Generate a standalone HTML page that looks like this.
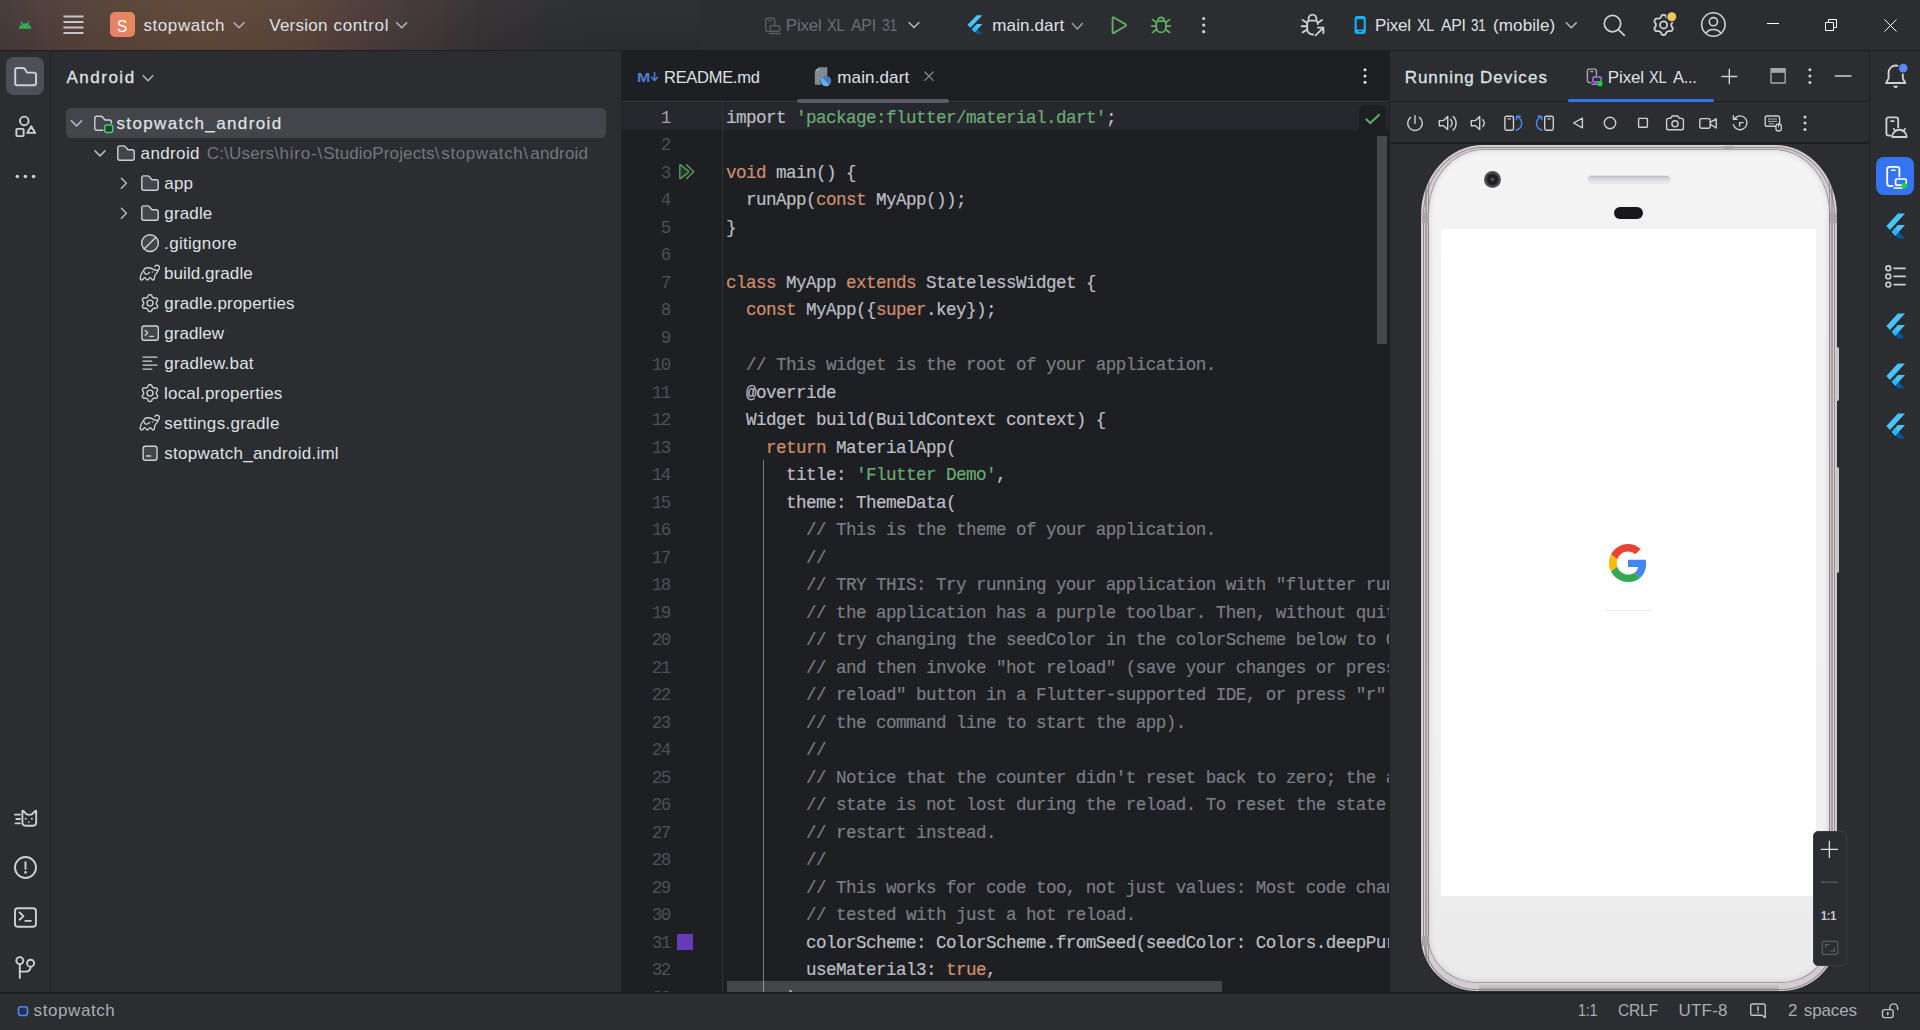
<!DOCTYPE html>
<html lang="en"><head><meta charset="utf-8"><title>stopwatch – main.dart</title>
<style>
*{box-sizing:border-box;margin:0;padding:0}
html,body{width:1920px;height:1030px;overflow:hidden;background:#2b2d30}
body{position:relative;font-family:"Liberation Sans",sans-serif;font-size:17px;color:#dfe1e5}
.a{position:absolute}
.t{position:absolute;white-space:pre;line-height:24px;height:24px}
svg{position:absolute;overflow:visible}
#titlebar{left:0;top:0;width:1920px;height:50px;background:#2b2d30}
#glow{left:0;top:0;width:700px;height:50px;background:linear-gradient(180deg,rgba(255,255,255,.02),rgba(0,0,0,.04)),linear-gradient(90deg,#453a38 0,#50403a 60px,#58433a 110px,#604839 200px,#59443a 300px,#45393a 400px,#363234 480px,#2d2e31 560px,#2b2d30 620px)}
#tb-line{left:0;top:50px;width:1920px;height:1px;background:#1e1f22}
#lstrip{left:0;top:51px;width:50px;height:941px;background:#2b2d30}
#lstrip-b{left:50px;top:51px;width:1px;height:941px;background:#1e1f22}
#proj{left:51px;top:51px;width:570px;height:941px;background:#2b2d30}
#editor{left:621px;top:51px;width:768px;height:941px;background:#1e1f22;overflow:hidden}
#rd{left:1390px;top:51px;width:479px;height:941px;background:#2b2d30;overflow:hidden}
#rd-bl{left:1389px;top:51px;width:1px;height:941px;background:#1e1f22}
#rd-br{left:1869px;top:51px;width:1px;height:941px;background:#1e1f22}
#rstrip{left:1870px;top:51px;width:50px;height:941px;background:#2b2d30}
#status{left:0;top:992px;width:1920px;height:38px;background:#2b2d30;border-top:2px solid #1e1f22}
.code{position:absolute;left:0;top:0;font-family:"Liberation Mono",monospace;font-size:17.6px;letter-spacing:-0.5617px;-webkit-text-stroke:.2px;line-height:27.5px;color:#bcbec4;white-space:pre}
.ln{position:absolute;font-family:"Liberation Mono",monospace;font-size:17.6px;letter-spacing:-1.56px;line-height:27.5px;color:#4b5059;text-align:right;white-space:pre}
.k{color:#cf8e6d}.s{color:#6aab73}.c{color:#7a7e85}

</style></head>
<body>
<div class="a" id="titlebar"></div><div class="a" id="glow"></div><div class="a" id="tb-line"></div>
<div class="a" id="lstrip"></div><div class="a" id="lstrip-b"></div>
<div class="a" id="proj"></div>
<div class="a" style="left:6px;top:57px;width:38px;height:38px;border-radius:8px;background:#4d5057"></div>
<div class="a" style="left:66px;top:108px;width:540px;height:30px;border-radius:5px;background:#43454a"></div>
<div class="a" style="left:110px;top:12px;width:25px;height:25px;border-radius:5px;background:linear-gradient(45deg,#e97f6d,#e18b58)"></div>
<div class="a" id="rstrip"></div>
<div class="a" style="left:1876px;top:157px;width:38px;height:38px;border-radius:8px;background:#3574f0"></div>
<div class="a" id="status"></div>
<div class="a" id="editor">
<div class="a" style="left:0;top:52px;width:768px;height:27px;background:#26282e"></div>
<div class="a" style="left:0;top:50px;width:768px;height:1px;background:#393b40"></div>
<div class="a" style="left:176px;top:48px;width:152px;height:4px;border-radius:2px;background:#5a5d63"></div>
<div class="a" style="left:101px;top:51px;width:1px;height:890px;background:#313438"></div>
<div class="a" style="left:142px;top:409px;width:1px;height:540px;background:#7b7b7d"></div>
<div class="ln" style="left:8.8px;top:53.57px;width:40px"><span style="color:#a1a3ab">1</span>
2
3
4
5
6
7
8
9
10
11
12
13
14
15
16
17
18
19
20
21
22
23
24
25
26
27
28
29
30
31
32
33</div>
<div class="code" style="left:105px;top:53.57px">import <span class="s">'package:flutter/material.dart'</span>;

<span class="k">void</span> main() {
  runApp(<span class="k">const</span> MyApp());
}

<span class="k">class</span> MyApp <span class="k">extends</span> StatelessWidget {
  <span class="k">const</span> MyApp({<span class="k">super</span>.key});

<span class="c">  // This widget is the root of your application.</span>
  @override
  Widget build(BuildContext context) {
    <span class="k">return</span> MaterialApp(
      title: <span class="s">'Flutter Demo'</span>,
      theme: ThemeData(
<span class="c">        // This is the theme of your application.</span>
<span class="c">        //</span>
<span class="c">        // TRY THIS: Try running your application with "flutter run". You'll see</span>
<span class="c">        // the application has a purple toolbar. Then, without quitting the app,</span>
<span class="c">        // try changing the seedColor in the colorScheme below to Colors.green</span>
<span class="c">        // and then invoke "hot reload" (save your changes or press the "hot</span>
<span class="c">        // reload" button in a Flutter-supported IDE, or press "r" if you used</span>
<span class="c">        // the command line to start the app).</span>
<span class="c">        //</span>
<span class="c">        // Notice that the counter didn't reset back to zero; the application</span>
<span class="c">        // state is not lost during the reload. To reset the state<span style="opacity:0">,</span> use hot</span>
<span class="c">        // restart instead.</span>
<span class="c">        //</span>
<span class="c">        // This works for code too, not just values: Most code changes can be</span>
<span class="c">        // tested with just a hot reload.</span>
        colorScheme: ColorScheme.fromSeed(seedColor: Colors.deepPurple),
        useMaterial3: <span class="k">true</span>,
      ),</div>
<div class="a" style="left:56px;top:883px;width:16px;height:16px;background:#673ab7"></div>
<div class="a" style="left:756px;top:85px;width:10px;height:208px;background:#464749"></div>
<div class="a" style="left:106px;top:930.3px;width:495px;height:10.7px;background:rgba(255,255,255,.175)"></div>
<div class="a" style="left:738px;top:54px;width:27px;height:26px;border-radius:6px 6px 0 0;background:#1e1f22"></div>
</div>
<div class="a" id="rd">
 <div class="a" style="left:0;top:50px;width:479px;height:1px;background:#1e1f22"></div>
 <div class="a" style="left:178px;top:48px;width:146px;height:3px;border-radius:2px;background:#3574f0"></div>
 <div class="a" style="left:0;top:91px;width:479px;height:2px;background:#1e1f22"></div>
 <!-- side buttons -->
 <div class="a" style="left:444px;top:296px;width:5px;height:54px;border-radius:2px;background:#c9cbcd"></div>
 <div class="a" style="left:444px;top:416px;width:5px;height:106px;border-radius:2px;background:#c9cbcd"></div>
 <!-- phone frame -->
 <div class="a" style="left:31px;top:94.4px;width:416px;height:846px;border-radius:62px 62px 56px 56px/70px 70px 54px 54px;background:linear-gradient(180deg,#e4dfe1 0,#d2cbce 35%,#b9b2b5 70%,#a59ea1 100%) 50% 100%/300px 10px no-repeat,linear-gradient(90deg,#c9c2c5 0,#d8d1d4 1.5px,#d6cfd2 4px,#9d9699 4.6px,#9d9699 5.4px,#d2cbce 6px,#d2cbce 7px,#8f888c 7.6px,#d3ccd0 8.4px,#d3ccd0 407.6px,#8f888c 408.4px,#d2cbce 409px,#d2cbce 410px,#9d9699 410.6px,#9d9699 411.4px,#d6cfd2 412px,#d8d1d4 414.5px,#bfb8bb 416px)"></div>
 <div class="a" style="left:33.2px;top:96px;width:411.6px;height:842.6px;border-radius:60px 60px 54px 54px/68px 68px 52px 52px;border:1px solid rgba(125,116,120,.75)"></div>
 <div class="a" style="left:38.6px;top:98.6px;width:400.8px;height:832.6px;border-radius:55px 55px 48px 48px/63px 63px 45px 45px;background:linear-gradient(180deg,#f4f4f5 0,#f2f2f3 130px,#f0f0f1 690px,#ebebec 790px,#ececed 833px);box-shadow:inset 0 0 5px 1px rgba(90,85,90,.16),0 0 0 .8px rgba(130,122,126,.8)"></div>
 <!-- antenna bands -->
 <div class="a" style="left:31.5px;top:162px;width:7px;height:10px;background:#a9a4a7"></div>
 <div class="a" style="left:439.5px;top:162px;width:7px;height:10px;background:#a9a4a7"></div>
 <div class="a" style="left:31.5px;top:885px;width:7px;height:10px;background:#a9a4a7"></div>
 <div class="a" style="left:439.5px;top:885px;width:7px;height:10px;background:#a9a4a7"></div>
 <div class="a" style="left:334px;top:94.6px;width:10px;height:4px;background:#a9a4a7"></div>
 <!-- screen -->
 <div class="a" style="left:51px;top:178px;width:375px;height:667px;background:#fff"></div>
 <!-- camera -->
 <div class="a" style="left:94px;top:120px;width:17px;height:17px;border-radius:50%;background:radial-gradient(circle at 50% 50%,#8a8c60 0,#2a2b2e 14%,#1a1b1e 38%,#484a4f 56%,#5a5c61 70%,#2e3034 86%,#5d5f63 100%)"></div>
 <!-- speaker -->
 <div class="a" style="left:198px;top:125px;width:82px;height:7px;border-radius:4px;background:linear-gradient(180deg,#b9bcc4 0,#d6d8de 40%,#e8e9ec 100%);box-shadow:0 0 0 1px #e6e6e8"></div>
 <!-- sensor -->
 <div class="a" style="left:224px;top:156px;width:29px;height:12px;border-radius:6px;background:#17181b"></div>
 <!-- google G -->
 <svg style="left:219px;top:492.7px" width="38" height="38" viewBox="0 0 48 48"><path fill="#EA4335" d="M24 9.5c3.54 0 6.71 1.22 9.21 3.6l6.85-6.85C35.9 2.38 30.47 0 24 0 14.62 0 6.51 5.38 2.56 13.22l7.98 6.19C12.43 13.72 17.74 9.5 24 9.5z"/><path fill="#4285F4" d="M46.98 24.55c0-1.57-.15-3.09-.38-4.55H24v9.02h12.94c-.58 2.96-2.26 5.48-4.78 7.18l7.73 6c4.51-4.18 7.09-10.36 7.09-17.65z"/><path fill="#FBBC05" d="M10.53 28.59c-.48-1.45-.76-2.99-.76-4.59s.27-3.14.76-4.59l-7.98-6.19C.92 16.46 0 20.12 0 24c0 3.88.92 7.54 2.56 10.78l7.97-6.19z"/><path fill="#34A853" d="M24 48c6.48 0 11.93-2.13 15.89-5.81l-7.73-6c-2.15 1.45-4.92 2.3-8.16 2.3-6.26 0-11.57-4.22-13.47-9.91l-7.98 6.19C6.51 42.62 14.62 48 24 48z"/></svg>
 <div class="a" style="left:215px;top:559px;width:47px;height:1px;background:#eeeeee"></div>
 <!-- zoom controls -->
 <div class="a" style="left:422.6px;top:780.4px;width:34.4px;height:134.6px;border-radius:5px;background:#2b2d30;border:1px solid #3c3e43"></div>
</div>
<div class="a" id="rd-bl"></div><div class="a" id="rd-br"></div>
<svg class="a" style="left:0;top:0" width="1920" height="1030" viewBox="0 0 1920 1030">
<path d="M18.8 28.8a6.25 5.5 0 0 1 12.5 0Z" fill="#33b058"/>
<path d="M22.5 24.2L21.3 21.8M27.6 24.2L28.8 21.8" stroke="#33b058" stroke-width="1.25" fill="none" stroke-linecap="round" stroke-linejoin="round" />
<circle cx="22.2" cy="26.4" r="0.7"  fill="#1f7a3c"/>
<circle cx="27.8" cy="26.4" r="0.7"  fill="#1f7a3c"/>
<rect x="63.5" y="15.5" width="20" height="2" fill="#c8c4c6"/>
<rect x="63.5" y="21" width="20" height="2" fill="#c8c4c6"/>
<rect x="63.5" y="26.5" width="20" height="2" fill="#c8c4c6"/>
<rect x="63.5" y="32" width="20" height="2" fill="#c8c4c6"/>
<path d="M234.0 22.8L239 27.8L244.0 22.8" stroke="#b4b8bf" stroke-width="1.5" fill="none" stroke-linecap="round" stroke-linejoin="round" />
<path d="M396.7 22.8L401.7 27.8L406.7 22.8" stroke="#b4b8bf" stroke-width="1.5" fill="none" stroke-linecap="round" stroke-linejoin="round" />
<rect x="765.7" y="18.2" width="9" height="13.2" rx="2" stroke="#5a5d63" stroke-width="1.4" fill="none"/>
<rect x="770.3" y="25.8" width="9.4" height="5.5" rx="1.2" stroke="#5a5d63" stroke-width="1.4" fill="#2b2d30"/>
<path d="M769.5 33.5H780.5" stroke="#5a5d63" stroke-width="1.4" fill="none" stroke-linecap="round" stroke-linejoin="round" />
<path d="M768.6 20.6H771.4" stroke="#5a5d63" stroke-width="1.2" fill="none" stroke-linecap="round" stroke-linejoin="round" />
<path d="M909.0 22.5L914 27.5L919.0 22.5" stroke="#b4b8bf" stroke-width="1.5" fill="none" stroke-linecap="round" stroke-linejoin="round" />
<polygon points="976.76,15.30 982.50,15.30 970.37,27.74 967.50,24.80" fill="#47c5fb"/>
<polygon points="971.79,29.20 977.53,29.20 982.50,34.30 976.76,34.30" fill="#01579b"/>
<polygon points="976.76,24.10 982.50,24.10 977.53,29.20 974.66,32.15 971.79,29.20" fill="#47c5fb"/>
<polygon points="977.53,29.20 974.66,32.15 971.79,29.20 974.66,26.26" fill="#29b6f6" opacity="0.9"/>
<path d="M1072.4 23.5L1077.4 28.9L1082.4 23.5" stroke="#9da0a8" stroke-width="1.5" fill="none" stroke-linecap="round" stroke-linejoin="round" />
<path d="M1112.6 18.2V32.2Q1112.6 33.6 1113.9 32.9L1125.6 26Q1126.7 25.2 1125.6 24.4L1113.9 17.5Q1112.6 16.8 1112.6 18.2Z" stroke="#5fad65" stroke-width="1.9" fill="none" stroke-linecap="round" stroke-linejoin="round" />
<g stroke="#5fad65" stroke-width="1.8" fill="none" stroke-linecap="round" stroke-linejoin="round"><path d="M1156.3 23.5Q1156.3 21.2 1158.6 21.2H1163.6Q1165.9 21.2 1165.9 23.5V27.6A4.8 4.8 0 0 1 1156.3 27.6Z"/><path d="M1157.8 20.8A3.3 3.3 0 0 1 1164.4 20.8"/><path d="M1152.6 19.6L1156.2 22.4M1169.6 19.6L1166 22.4M1151.9 26.2H1156.2M1170.3 26.2H1166M1152.6 32.4L1156.5 29.6M1169.6 32.4L1165.7 29.6"/></g>
<circle cx="1203.7" cy="18.5" r="1.6"  fill="#ced0d6"/>
<circle cx="1203.7" cy="25.1" r="1.6"  fill="#ced0d6"/>
<circle cx="1203.7" cy="31.7" r="1.6"  fill="#ced0d6"/>
<g stroke="#ced0d6" stroke-width="1.85" fill="none" stroke-linecap="round" stroke-linejoin="round"><path d="M1308.5 19.2A4 4.6 0 0 1 1316.5 19.2"/><path d="M1317.8 24V23.3Q1317.8 20.6 1315.2 20.6H1309.8Q1307.2 20.6 1307.2 23.3V29.2A5.4 5.4 0 0 0 1313.2 34.5"/><path d="M1302.6 20L1306.8 22.6M1301.6 26.2H1306.8M1302.6 32.4L1306.9 29.8M1322 20L1318.4 22.6"/><path d="M1315.6 35.4L1323.4 27.6M1318 27.6H1323.4V33.2"/></g>
<rect x="1354.6" y="16.1" width="11.2" height="17.8" rx="2.7" fill="#12b3ff"/>
<rect x="1356.7" y="19.3" width="7" height="10.3" rx="0.3" fill="#2b2d30"/>
<ellipse cx="1360.2" cy="31.6" rx="1.9" ry="0.6" fill="#2b2d30"/>
<path d="M1566.3 22.8L1571.3 27.8L1576.3 22.8" stroke="#b4b8bf" stroke-width="1.5" fill="none" stroke-linecap="round" stroke-linejoin="round" />
<circle cx="1612.5" cy="23.6" r="8.2" stroke="#ced0d6" stroke-width="1.7" fill="none"/>
<path d="M1618.4 29.6L1624.3 35.4" stroke="#ced0d6" stroke-width="1.7" fill="none" stroke-linecap="round" stroke-linejoin="round" />
<path d="M1663.6 14.8L1664.3 14.8L1664.9 15.0L1665.5 15.5L1665.9 16.3L1666.2 17.1L1666.6 17.7L1667.0 18.0L1667.4 18.2L1667.9 18.5L1668.4 18.7L1669.0 18.7L1669.9 18.6L1670.8 18.6L1671.5 18.8L1672.0 19.3L1672.3 19.8L1672.6 20.4L1672.8 21.1L1672.7 21.8L1672.2 22.6L1671.6 23.3L1671.4 23.9L1671.3 24.4L1671.3 24.9L1671.3 25.4L1671.4 25.9L1671.6 26.5L1672.2 27.2L1672.7 28.0L1672.8 28.7L1672.6 29.4L1672.3 29.9L1672.0 30.5L1671.5 31.0L1670.8 31.2L1669.9 31.2L1669.0 31.1L1668.4 31.1L1667.9 31.3L1667.4 31.6L1667.0 31.8L1666.6 32.1L1666.2 32.7L1665.9 33.5L1665.5 34.3L1664.9 34.8L1664.3 35.0L1663.6 35.0L1662.9 35.0L1662.3 34.8L1661.7 34.3L1661.3 33.5L1661.0 32.7L1660.6 32.1L1660.2 31.8L1659.8 31.6L1659.3 31.3L1658.8 31.1L1658.2 31.1L1657.3 31.2L1656.4 31.2L1655.7 31.0L1655.2 30.5L1654.9 30.0L1654.6 29.4L1654.4 28.7L1654.5 28.0L1655.0 27.2L1655.6 26.5L1655.8 25.9L1655.9 25.4L1655.9 24.9L1655.9 24.4L1655.8 23.9L1655.6 23.3L1655.0 22.6L1654.5 21.8L1654.4 21.1L1654.6 20.4L1654.9 19.8L1655.2 19.3L1655.7 18.8L1656.4 18.6L1657.3 18.6L1658.2 18.7L1658.8 18.7L1659.3 18.5L1659.8 18.2L1660.2 18.0L1660.6 17.7L1661.0 17.1L1661.3 16.3L1661.7 15.5L1662.3 15.0L1662.9 14.8Z" stroke="#ced0d6" stroke-width="1.8" fill="none" stroke-linecap="round" stroke-linejoin="round" />
<circle cx="1663.6" cy="24.9" r="3.6" stroke="#ced0d6" stroke-width="1.8" fill="none"/>
<circle cx="1671.8" cy="16.7" r="5.6"  fill="#2b2d30"/>
<circle cx="1671.8" cy="16.7" r="4.5"  fill="#f2c55c"/>
<circle cx="1713.4" cy="24.5" r="11.7" stroke="#ced0d6" stroke-width="1.6" fill="none"/>
<circle cx="1713.4" cy="21.7" r="4.1" stroke="#ced0d6" stroke-width="1.6" fill="none"/>
<path d="M1705.9 33.4A8.2 6.6 0 0 1 1720.9 33.4" stroke="#ced0d6" stroke-width="1.6" fill="none" stroke-linecap="round" stroke-linejoin="round" />
<path d="M1767 23.5H1779M1825.5 22.5H1833.5V30.5H1825.5ZM1828.5 22.5V19.5H1836.5V27.5H1833.5M1884.5 19.5L1896.5 31.5M1896.5 19.5L1884.5 31.5" stroke="#ffffff" stroke-width="1" fill="none"/>
<path d="M15.2 70Q15.2 68 17.2 68L22.436 68Q23.936 68 24.936 69L27.136 72.644L34.0 72.644Q36.0 72.644 36.0 74.644L36.0 83.2Q36.0 85.2 34.0 85.2L17.2 85.2Q15.2 85.2 15.2 83.2Z" stroke="#ced0d6" stroke-width="1.95" fill="none" stroke-linecap="round" stroke-linejoin="round" />
<circle cx="24.3" cy="120.9" r="4.3" stroke="#ced0d6" stroke-width="1.9" fill="none"/>
<rect x="16.4" y="128.9" width="7.2" height="7.2" rx="0.8" stroke="#ced0d6" stroke-width="1.9" fill="none"/>
<path d="M31.2 126.2L35.2 132.9H27.2Z" stroke="#ced0d6" stroke-width="1.9" fill="none" stroke-linecap="round" stroke-linejoin="round" />
<circle cx="25.4" cy="176.5" r="1.75"  fill="#ced0d6"/>
<circle cx="17.3" cy="176.5" r="1.75"  fill="#ced0d6"/>
<circle cx="33.6" cy="176.5" r="1.75"  fill="#ced0d6"/>
<g stroke="#ced0d6" stroke-width="1.85" fill="none" stroke-linecap="round" stroke-linejoin="round"><path d="M22.4 811.4Q22.4 810.2 23.3 811L27 814.6H31.6L35.3 811Q36.2 810.2 36.2 811.4V822.6Q36.2 825.7 33.1 825.7H25.5Q22.4 825.7 22.4 822.6Z"/><path d="M14.8 814.6H20M16.3 819H20M15.5 823.3H20"/></g>
<circle cx="25.6" cy="818.7" r="1"  fill="#ced0d6"/>
<circle cx="31.9" cy="818.7" r="1"  fill="#ced0d6"/>
<path d="M27.4 821.4H30.2L28.8 823.2Z" fill="#ced0d6"/>
<circle cx="25.5" cy="867.5" r="10.5" stroke="#ced0d6" stroke-width="1.9" fill="none"/>
<path d="M25.5 862.3V868.9" stroke="#ced0d6" stroke-width="1.9" fill="none" stroke-linecap="round" stroke-linejoin="round" />
<circle cx="25.5" cy="872.4" r="1.3"  fill="#ced0d6"/>
<rect x="15" y="908.3" width="20.9" height="18.4" rx="2.6" stroke="#ced0d6" stroke-width="1.9" fill="none"/>
<path d="M19.6 912.5L23.5 916.1L19.6 919.7M25.3 920.9H30.9" stroke="#ced0d6" stroke-width="1.9" fill="none" stroke-linecap="round" stroke-linejoin="round" />
<circle cx="19.8" cy="960.6" r="3.5" stroke="#ced0d6" stroke-width="1.9" fill="none"/>
<circle cx="30.6" cy="963.2" r="3.5" stroke="#ced0d6" stroke-width="1.9" fill="none"/>
<path d="M19.8 964.2V978M30.6 966.8Q30.6 971.6 25.6 971.6H19.8" stroke="#ced0d6" stroke-width="1.9" fill="none" stroke-linecap="round" stroke-linejoin="round" />
<path d="M143.2 75.8L148 80.8L152.8 75.8" stroke="#b4b8bf" stroke-width="1.5" fill="none" stroke-linecap="round" stroke-linejoin="round" />
<path d="M71.5 120.9L76.5 125.9L81.5 120.9" stroke="#b4b8bf" stroke-width="1.5" fill="none" stroke-linecap="round" stroke-linejoin="round" />
<path d="M94.8 118.2Q94.8 116.2 96.8 116.2L100.27199999999999 116.2Q101.77199999999999 116.2 102.77199999999999 117.2L104.972 119.98L109.4 119.98Q111.4 119.98 111.4 121.98L111.4 128.2Q111.4 130.2 109.4 130.2L96.8 130.2Q94.8 130.2 94.8 128.2Z" stroke="#ced0d6" stroke-width="1.4" fill="none" stroke-linecap="round" stroke-linejoin="round" />
<rect x="104.7" y="124.9" width="8" height="7.6" rx="2" stroke="#43454a" stroke-width="2.6" fill="#43454a"/>
<rect x="104.7" y="124.9" width="8" height="7.6" rx="2" stroke="#3fcf6e" stroke-width="1.5" fill="#24402c"/>
<path d="M95.0 150.9L100 155.9L105.0 150.9" stroke="#b4b8bf" stroke-width="1.5" fill="none" stroke-linecap="round" stroke-linejoin="round" />
<path d="M117.8 147.9Q117.8 145.9 119.8 145.9L123.188 145.9Q124.688 145.9 125.688 146.9L127.888 149.788L132.2 149.788Q134.2 149.788 134.2 151.788L134.2 158.3Q134.2 160.3 132.2 160.3L119.8 160.3Q117.8 160.3 117.8 158.3Z" stroke="#ced0d6" stroke-width="1.4" fill="#43454a" stroke-linecap="round" stroke-linejoin="round" />
<path d="M121.4 178.2L126.4 183.2L121.4 188.2" stroke="#b4b8bf" stroke-width="1.5" fill="none" stroke-linecap="round" stroke-linejoin="round" />
<path d="M141.8 177.9Q141.8 175.9 143.8 175.9L147.18800000000002 175.9Q148.68800000000002 175.9 149.68800000000002 176.9L151.888 179.788L156.20000000000002 179.788Q158.20000000000002 179.788 158.20000000000002 181.788L158.20000000000002 188.3Q158.20000000000002 190.3 156.20000000000002 190.3L143.8 190.3Q141.8 190.3 141.8 188.3Z" stroke="#ced0d6" stroke-width="1.4" fill="#43454a" stroke-linecap="round" stroke-linejoin="round" />
<path d="M121.4 208.2L126.4 213.2L121.4 218.2" stroke="#b4b8bf" stroke-width="1.5" fill="none" stroke-linecap="round" stroke-linejoin="round" />
<path d="M141.8 207.9Q141.8 205.9 143.8 205.9L147.18800000000002 205.9Q148.68800000000002 205.9 149.68800000000002 206.9L151.888 209.788L156.20000000000002 209.788Q158.20000000000002 209.788 158.20000000000002 211.788L158.20000000000002 218.3Q158.20000000000002 220.3 156.20000000000002 220.3L143.8 220.3Q141.8 220.3 141.8 218.3Z" stroke="#ced0d6" stroke-width="1.4" fill="#43454a" stroke-linecap="round" stroke-linejoin="round" />
<circle cx="150" cy="243.1" r="8.4" stroke="#ced0d6" stroke-width="1.4" fill="#43454a"/>
<path d="M144.3 248.8L155.7 237.4" stroke="#ced0d6" stroke-width="1.4" fill="none" stroke-linecap="round" stroke-linejoin="round" />
<g transform="translate(0 0)" stroke="#ced0d6" stroke-width="1.35" fill="none" stroke-linecap="round" stroke-linejoin="round"><path d="M140.4 279C140.2 276 141.5 272.8 143.6 270.6C144 269.6 144.2 269 144.7 268.6C146.2 267.5 150 267.4 152.4 268.8C154 269.7 156.4 270.7 158 270.1C159.7 269.4 159.9 266.7 158.5 265.6C157.3 264.7 155.3 265.2 154.9 266.5"/><path d="M158.3 269.9C158.1 272 156.1 273.6 155.3 274.6C154.5 275.7 154.4 277.6 154.2 279.1C153.9 280.2 152.7 280.1 152.2 279.6L151 278.1Q150.2 277.4 149.4 278.1L148.2 279.6Q147.4 280.3 146.6 279.6L145.4 278.1Q144.7 277.4 143.9 278.1L142.7 279.5C142 280.3 140.6 280.2 140.4 279"/><path d="M143.8 271.4C144.2 272.8 144.8 273.8 145.6 274.1C146.8 274.4 148.4 273.4 149.6 272.4"/></g>
<circle cx="152.5" cy="272.1" r="0.75"  fill="#ced0d6"/>
<g transform="translate(0 150)" stroke="#ced0d6" stroke-width="1.35" fill="none" stroke-linecap="round" stroke-linejoin="round"><path d="M140.4 279C140.2 276 141.5 272.8 143.6 270.6C144 269.6 144.2 269 144.7 268.6C146.2 267.5 150 267.4 152.4 268.8C154 269.7 156.4 270.7 158 270.1C159.7 269.4 159.9 266.7 158.5 265.6C157.3 264.7 155.3 265.2 154.9 266.5"/><path d="M158.3 269.9C158.1 272 156.1 273.6 155.3 274.6C154.5 275.7 154.4 277.6 154.2 279.1C153.9 280.2 152.7 280.1 152.2 279.6L151 278.1Q150.2 277.4 149.4 278.1L148.2 279.6Q147.4 280.3 146.6 279.6L145.4 278.1Q144.7 277.4 143.9 278.1L142.7 279.5C142 280.3 140.6 280.2 140.4 279"/><path d="M143.8 271.4C144.2 272.8 144.8 273.8 145.6 274.1C146.8 274.4 148.4 273.4 149.6 272.4"/></g>
<circle cx="152.5" cy="422.1" r="0.75"  fill="#ced0d6"/>
<path d="M150.0 294.7L150.5 294.7L151.1 294.9L151.6 295.3L151.9 296.0L152.2 296.7L152.5 297.2L152.8 297.4L153.2 297.6L153.5 297.8L153.9 298.0L154.4 298.0L155.2 297.9L156.0 297.8L156.6 298.1L157.0 298.4L157.3 298.9L157.5 299.4L157.6 299.9L157.5 300.5L157.1 301.2L156.6 301.8L156.4 302.3L156.3 302.7L156.3 303.1L156.3 303.5L156.4 303.9L156.6 304.4L157.1 305.0L157.5 305.7L157.6 306.3L157.5 306.8L157.3 307.3L157.0 307.8L156.6 308.1L156.0 308.4L155.2 308.3L154.4 308.2L153.9 308.2L153.5 308.4L153.2 308.6L152.8 308.8L152.5 309.0L152.2 309.5L151.9 310.2L151.6 310.9L151.1 311.3L150.5 311.5L150.0 311.5L149.5 311.5L148.9 311.3L148.4 310.9L148.1 310.2L147.8 309.5L147.5 309.0L147.2 308.8L146.8 308.6L146.5 308.4L146.1 308.2L145.6 308.2L144.8 308.3L144.0 308.4L143.4 308.1L143.0 307.8L142.7 307.3L142.5 306.8L142.4 306.3L142.5 305.7L142.9 305.0L143.4 304.4L143.6 303.9L143.7 303.5L143.7 303.1L143.7 302.7L143.6 302.3L143.4 301.8L142.9 301.2L142.5 300.5L142.4 299.9L142.5 299.4L142.7 298.9L143.0 298.4L143.4 298.1L144.0 297.8L144.8 297.9L145.6 298.0L146.1 298.0L146.5 297.8L146.8 297.6L147.2 297.4L147.5 297.2L147.8 296.7L148.1 296.0L148.4 295.3L148.9 294.9L149.5 294.7Z" stroke="#ced0d6" stroke-width="1.4" fill="none" stroke-linecap="round" stroke-linejoin="round" />
<circle cx="150" cy="303.1" r="3.0" stroke="#ced0d6" stroke-width="1.4" fill="none"/>
<path d="M150.0 384.7L150.5 384.7L151.1 384.9L151.6 385.3L151.9 386.0L152.2 386.7L152.5 387.2L152.8 387.4L153.2 387.6L153.5 387.8L153.9 388.0L154.4 388.0L155.2 387.9L156.0 387.8L156.6 388.1L157.0 388.4L157.3 388.9L157.5 389.4L157.6 389.9L157.5 390.5L157.1 391.2L156.6 391.8L156.4 392.3L156.3 392.7L156.3 393.1L156.3 393.5L156.4 393.9L156.6 394.4L157.1 395.0L157.5 395.7L157.6 396.3L157.5 396.8L157.3 397.3L157.0 397.8L156.6 398.1L156.0 398.4L155.2 398.3L154.4 398.2L153.9 398.2L153.5 398.4L153.2 398.6L152.8 398.8L152.5 399.0L152.2 399.5L151.9 400.2L151.6 400.9L151.1 401.3L150.5 401.5L150.0 401.5L149.5 401.5L148.9 401.3L148.4 400.9L148.1 400.2L147.8 399.5L147.5 399.0L147.2 398.8L146.8 398.6L146.5 398.4L146.1 398.2L145.6 398.2L144.8 398.3L144.0 398.4L143.4 398.1L143.0 397.8L142.7 397.3L142.5 396.8L142.4 396.3L142.5 395.7L142.9 395.0L143.4 394.4L143.6 393.9L143.7 393.5L143.7 393.1L143.7 392.7L143.6 392.3L143.4 391.8L142.9 391.2L142.5 390.5L142.4 389.9L142.5 389.4L142.7 388.9L143.0 388.4L143.4 388.1L144.0 387.8L144.8 387.9L145.6 388.0L146.1 388.0L146.5 387.8L146.8 387.6L147.2 387.4L147.5 387.2L147.8 386.7L148.1 386.0L148.4 385.3L148.9 384.9L149.5 384.7Z" stroke="#ced0d6" stroke-width="1.4" fill="none" stroke-linecap="round" stroke-linejoin="round" />
<circle cx="150" cy="393.1" r="3.0" stroke="#ced0d6" stroke-width="1.4" fill="none"/>
<rect x="141.9" y="326" width="16.4" height="14.2" rx="2.2" stroke="#ced0d6" stroke-width="1.4" fill="#43454a"/>
<path d="M145.2 330.4L147.8 332.8L145.2 335.2M149.6 336.3H153.6" stroke="#ced0d6" stroke-width="1.3" fill="none" stroke-linecap="round" stroke-linejoin="round" />
<path d="M143 357.1H157M143 361.1H151.8M143 365.1H157M143 369.1H151.8" stroke="#ced0d6" stroke-width="1.4" fill="none" stroke-linecap="round" stroke-linejoin="round" />
<rect x="143.1" y="446.3" width="13.9" height="13.9" rx="2.2" stroke="#ced0d6" stroke-width="1.4" fill="#43454a"/>
<path d="M146.6 456H150.6" stroke="#ced0d6" stroke-width="1.4" fill="none" stroke-linecap="round" stroke-linejoin="round" />
<path d="M654.5 72.6V80.2M651.6 77.4L654.5 80.4L657.4 77.4" stroke="#4d7fd9" stroke-width="1.5" fill="none" stroke-linecap="round" stroke-linejoin="round" />
<path d="M819 67.2H827.3V77A5.2 5.2 0 0 0 821.4 84.8H814.8V71.4Z" fill="#7f8b91"/>
<path d="M818.6 67.4V71H815Z" fill="#a9b3b8"/>
<g transform="rotate(45 826 81)"><path d="M820.8 81A5.2 5.2 0 0 1 831.2 81Z" fill="#4a78c2"/><path d="M820.8 81A5.2 5.2 0 0 0 831.2 81Z" fill="#5fb0ef"/></g>
<path d="M924.8 72L933.2 80.4M933.2 72L924.8 80.4" stroke="#868a91" stroke-width="1.2" fill="none" stroke-linecap="round" stroke-linejoin="round" />
<circle cx="1365" cy="69.8" r="1.5"  fill="#dfe1e5"/>
<circle cx="1365" cy="76" r="1.5"  fill="#dfe1e5"/>
<circle cx="1365" cy="82.3" r="1.5"  fill="#dfe1e5"/>
<path d="M1365.8 118.8L1370.3 123.1L1379.6 114.2" stroke="#5fad65" stroke-width="2" fill="none" stroke-linecap="round" stroke-linejoin="round" style="stroke-linecap:butt;stroke-linejoin:miter"/>
<path d="M679.8 165.6V177.8Q679.8 179 680.9 178.3L688.4 172.3Q689 171.7 688.4 171.1L680.9 165.1Q679.8 164.4 679.8 165.6Z" stroke="#57965c" stroke-width="1.5" fill="#253627" stroke-linecap="round" stroke-linejoin="round" />
<path d="M686.6 164.9L693.8 171.7L686.6 178.5" stroke="#57965c" stroke-width="1.5" fill="none" stroke-linecap="round" stroke-linejoin="round" />
<path d="M1591 82.6H1589.4Q1587.4 82.6 1587.4 80.6V71.1Q1587.4 69.1 1589.4 69.1H1594.4Q1596.4 69.1 1596.4 71.1V75.2" stroke="#a8abb1" stroke-width="1.4" fill="none" stroke-linecap="round" stroke-linejoin="round" />
<path d="M1590.6 71.6H1593" stroke="#a8abb1" stroke-width="1.2" fill="none" stroke-linecap="round" stroke-linejoin="round" />
<rect x="1592.8" y="77" width="8.4" height="5" rx="1.2" stroke="#b07ce8" stroke-width="1.4" fill="none"/>
<path d="M1592 84.2H1598" stroke="#b07ce8" stroke-width="1.4" fill="none" stroke-linecap="round" stroke-linejoin="round" />
<circle cx="1600" cy="83.8" r="2.6"  fill="#0bdc1c"/>
<path d="M1729.3 69.2V83.8M1721.8 76.5H1736.8" stroke="#ced0d6" stroke-width="1.4" fill="none" stroke-linecap="round" stroke-linejoin="round" />
<rect x="1771" y="68.8" width="14.2" height="14.2" rx="0.5" stroke="#a3a6ad" stroke-width="1.4" fill="none"/>
<rect x="1771" y="68.8" width="14.2" height="4" fill="#a3a6ad"/>
<circle cx="1809.9" cy="69.7" r="1.5"  fill="#ced0d6"/>
<circle cx="1809.9" cy="76" r="1.5"  fill="#ced0d6"/>
<circle cx="1809.9" cy="82.4" r="1.5"  fill="#ced0d6"/>
<path d="M1835.5 76H1850.8" stroke="#a3a6ad" stroke-width="1.8" fill="none" stroke-linecap="round" stroke-linejoin="round" />
<path d="M1410.6 117.4A7.3 7.3 0 1 0 1419.4 117.4M1415 115.6V123.4" stroke="#ced0d6" stroke-width="1.4" fill="none" stroke-linecap="round" stroke-linejoin="round" />
<path d="M1439.3 120.6H1443.5L1447.7 116.6V129.6L1443.5 125.8H1439.3Z" stroke="#ced0d6" stroke-width="1.4" fill="none" stroke-linecap="round" stroke-linejoin="round" />
<path d="M1450.6 119.6A5 5 0 0 1 1450.6 126.8M1453.2 116.4A9.4 9.4 0 0 1 1453.2 130" stroke="#ced0d6" stroke-width="1.4" fill="none" stroke-linecap="round" stroke-linejoin="round" />
<path d="M1471.3 120.6H1475.5L1479.7 116.6V129.6L1475.5 125.8H1471.3Z" stroke="#ced0d6" stroke-width="1.4" fill="none" stroke-linecap="round" stroke-linejoin="round" />
<path d="M1482.8 119.8A4.8 4.8 0 0 1 1482.8 126.6" stroke="#ced0d6" stroke-width="1.4" fill="none" stroke-linecap="round" stroke-linejoin="round" />
<rect x="1504.9" y="116.2" width="8.6" height="14" rx="1.6" stroke="#ced0d6" stroke-width="1.4" fill="none"/>
<path d="M1508 118.8H1510.4" stroke="#ced0d6" stroke-width="1.2" fill="none" stroke-linecap="round" stroke-linejoin="round" />
<path d="M1516.2 130.2C1523.4 127.6 1523.2 120 1517.4 116.6M1516.6 119.6V116.2H1520.2" stroke="#4a88f0" stroke-width="1.5" fill="none" stroke-linecap="round" stroke-linejoin="round" />
<rect x="1544.7" y="116.2" width="8.6" height="14" rx="1.6" stroke="#ced0d6" stroke-width="1.4" fill="none"/>
<path d="M1547.8 118.8H1550.2" stroke="#ced0d6" stroke-width="1.2" fill="none" stroke-linecap="round" stroke-linejoin="round" />
<path d="M1542 130.2C1534.8 127.6 1535 120 1540.8 116.6M1541.6 119.6V116.2H1538" stroke="#4a88f0" stroke-width="1.5" fill="none" stroke-linecap="round" stroke-linejoin="round" />
<path d="M1573.6 123L1582.4 118.2V127.8Z" stroke="#ced0d6" stroke-width="1.4" fill="none" stroke-linecap="round" stroke-linejoin="round" />
<circle cx="1610" cy="123" r="5.7" stroke="#ced0d6" stroke-width="1.4" fill="none"/>
<rect x="1638.6" y="118.4" width="8.8" height="8.8" rx="0.6" stroke="#ced0d6" stroke-width="1.4" fill="none"/>
<path d="M1668.4 118.4H1670.6L1672.2 116H1677.8L1679.4 118.4H1681.6Q1683.4 118.4 1683.4 120.2V128Q1683.4 129.8 1681.6 129.8H1668.4Q1666.6 129.8 1666.6 128V120.2Q1666.6 118.4 1668.4 118.4Z" stroke="#ced0d6" stroke-width="1.4" fill="none" stroke-linecap="round" stroke-linejoin="round" />
<circle cx="1675" cy="123.8" r="3.1" stroke="#ced0d6" stroke-width="1.4" fill="none"/>
<rect x="1699.8" y="118.6" width="10.4" height="9.6" rx="1.4" stroke="#ced0d6" stroke-width="1.4" fill="none"/>
<path d="M1710.4 122.4L1716.2 118.8V128L1710.4 124.4" stroke="#ced0d6" stroke-width="1.4" fill="none" stroke-linecap="round" stroke-linejoin="round" />
<path d="M1734.6 118.6A6.9 6.9 0 1 1 1733.4 124.6M1733.4 115.6V119.2H1737M1739.6 126V122.6H1743.2" stroke="#ced0d6" stroke-width="1.4" fill="none" stroke-linecap="round" stroke-linejoin="round" />
<rect x="1765.2" y="116" width="14.4" height="10.2" rx="1.8" stroke="#ced0d6" stroke-width="1.4" fill="none"/>
<path d="M1768.4 119H1776.4M1768.4 121.4H1776.4M1769.6 123.8H1774" stroke="#ced0d6" stroke-width="1" fill="none" stroke-linecap="round" stroke-linejoin="round" stroke-dasharray="1.2 1.2"/>
<rect x="1775.9" y="124" width="5.4" height="7" rx="2.6" stroke="#ced0d6" stroke-width="1.3" fill="#2b2d30"/>
<path d="M1778.6 124.2V126.8" stroke="#ced0d6" stroke-width="1.1" fill="none" stroke-linecap="round" stroke-linejoin="round" />
<circle cx="1805" cy="116.9" r="1.5"  fill="#ced0d6"/>
<circle cx="1805" cy="123.1" r="1.5"  fill="#ced0d6"/>
<circle cx="1805" cy="129.4" r="1.5"  fill="#ced0d6"/>
<path d="M1829.4 841.2V857.4M1821.3 849.3H1837.5" stroke="#dfe1e5" stroke-width="1.3" fill="none" stroke-linecap="round" stroke-linejoin="round" />
<path d="M1821.3 882.2H1837.5" stroke="#5a5d63" stroke-width="1.3" fill="none" stroke-linecap="round" stroke-linejoin="round" />
<rect x="1822.2" y="941.4" width="15.6" height="12.9" rx="2" stroke="#5a5d63" stroke-width="1.2" fill="none"/>
<path d="M1825.6 947.4V944.6H1829M1834.4 948.4V951.2H1831" stroke="#5a5d63" stroke-width="1.2" fill="none" stroke-linecap="round" stroke-linejoin="round" />
<path d="M1886 83H1905.4L1902.8 78.4V72.6A7 7 0 0 0 1888.6 72.6V78.4Z" stroke="#ced0d6" stroke-width="1.85" fill="none" stroke-linecap="round" stroke-linejoin="round" />
<path d="M1893.2 85.7H1898A2.4 2.4 0 0 1 1893.2 85.7Z" fill="#ced0d6"/>
<circle cx="1903.2" cy="68.1" r="5.6"  fill="#2b2d30"/>
<circle cx="1903.2" cy="68.1" r="4.4"  fill="#548af7"/>
<path d="M1890.6 135.6H1888.7Q1886.4 135.6 1886.4 133.3V119.7Q1886.4 117.4 1888.7 117.4H1895.9Q1898.2 117.4 1898.2 119.7V127.4" stroke="#ced0d6" stroke-width="1.85" fill="none" stroke-linecap="round" stroke-linejoin="round" />
<path d="M1891 121.2H1893.8" stroke="#ced0d6" stroke-width="1.7" fill="none" stroke-linecap="round" stroke-linejoin="round" />
<path d="M1892.2 137A7.2 7.2 0 0 1 1906.6 137Z" stroke="#ced0d6" stroke-width="1.85" fill="none" stroke-linecap="round" stroke-linejoin="round" />
<path d="M1895.4 131.4L1893.8 128.8M1903.4 131.4L1905 128.8" stroke="#ced0d6" stroke-width="1.7" fill="none" stroke-linecap="round" stroke-linejoin="round" />
<path d="M1892.6 186H1889.6Q1887.2 186 1887.2 183.6V169.2Q1887.2 166.8 1889.6 166.8H1897Q1899.4 166.8 1899.4 169.2V176.6" stroke="#ffffff" stroke-width="1.8" fill="none" stroke-linecap="round" stroke-linejoin="round" />
<path d="M1891.6 170.2H1895" stroke="#ffffff" stroke-width="1.6" fill="none" stroke-linecap="round" stroke-linejoin="round" />
<rect x="1895.6" y="179" width="10.6" height="6.2" rx="1" stroke="#ffffff" stroke-width="1.7" fill="none"/>
<path d="M1894.4 188H1902" stroke="#ffffff" stroke-width="1.7" fill="none" stroke-linecap="round" stroke-linejoin="round" />
<circle cx="1904.3" cy="185.6" r="2.8"  fill="#0bdc1c"/>
<polygon points="1897.88,213.50 1905.00,213.50 1889.96,229.88 1886.40,226.00" fill="#47c5fb"/>
<polygon points="1891.72,231.79 1898.84,231.79 1905.00,238.50 1897.88,238.50" fill="#01579b"/>
<polygon points="1897.88,225.08 1905.00,225.08 1898.84,231.79 1895.28,235.67 1891.72,231.79" fill="#47c5fb"/>
<polygon points="1898.84,231.79 1895.28,235.67 1891.72,231.79 1895.28,227.92" fill="#29b6f6" opacity="0.9"/>
<polygon points="1897.88,313.50 1905.00,313.50 1889.96,329.88 1886.40,326.00" fill="#47c5fb"/>
<polygon points="1891.72,331.79 1898.84,331.79 1905.00,338.50 1897.88,338.50" fill="#01579b"/>
<polygon points="1897.88,325.08 1905.00,325.08 1898.84,331.79 1895.28,335.67 1891.72,331.79" fill="#47c5fb"/>
<polygon points="1898.84,331.79 1895.28,335.67 1891.72,331.79 1895.28,327.92" fill="#29b6f6" opacity="0.9"/>
<polygon points="1897.88,363.50 1905.00,363.50 1889.96,379.88 1886.40,376.00" fill="#47c5fb"/>
<polygon points="1891.72,381.79 1898.84,381.79 1905.00,388.50 1897.88,388.50" fill="#01579b"/>
<polygon points="1897.88,375.08 1905.00,375.08 1898.84,381.79 1895.28,385.67 1891.72,381.79" fill="#47c5fb"/>
<polygon points="1898.84,381.79 1895.28,385.67 1891.72,381.79 1895.28,377.92" fill="#29b6f6" opacity="0.9"/>
<polygon points="1897.88,413.50 1905.00,413.50 1889.96,429.88 1886.40,426.00" fill="#47c5fb"/>
<polygon points="1891.72,431.79 1898.84,431.79 1905.00,438.50 1897.88,438.50" fill="#01579b"/>
<polygon points="1897.88,425.08 1905.00,425.08 1898.84,431.79 1895.28,435.67 1891.72,431.79" fill="#47c5fb"/>
<polygon points="1898.84,431.79 1895.28,435.67 1891.72,431.79 1895.28,427.92" fill="#29b6f6" opacity="0.9"/>
<circle cx="1888.3" cy="268.3" r="2.4" stroke="#ced0d6" stroke-width="1.6" fill="none"/>
<path d="M1894.2 268.3H1905" stroke="#ced0d6" stroke-width="1.85" fill="none" stroke-linecap="round" stroke-linejoin="round" />
<circle cx="1888.3" cy="276.4" r="2.4" stroke="#ced0d6" stroke-width="1.6" fill="none"/>
<path d="M1894.2 276.4H1905" stroke="#ced0d6" stroke-width="1.85" fill="none" stroke-linecap="round" stroke-linejoin="round" />
<circle cx="1888.3" cy="284.6" r="2.4" stroke="#ced0d6" stroke-width="1.6" fill="none"/>
<path d="M1894.2 284.6H1905" stroke="#ced0d6" stroke-width="1.85" fill="none" stroke-linecap="round" stroke-linejoin="round" />
<rect x="18.5" y="1006.7" width="9" height="8.7" rx="2.4" stroke="#548af7" stroke-width="1.5" fill="#25324d"/>
<path d="M1752.2 1004H1763.7Q1765.2 1004 1765.2 1005.5V1017.6L1762 1015.2H1752.2Q1750.7 1015.2 1750.7 1013.7V1005.5Q1750.7 1004 1752.2 1004Z" stroke="#c0c3c9" stroke-width="1.4" fill="none" stroke-linecap="round" stroke-linejoin="round" />
<path d="M1758 1006.8V1010.6" stroke="#c0c3c9" stroke-width="1.5" fill="none" stroke-linecap="round" stroke-linejoin="round" />
<circle cx="1758" cy="1012.6" r="0.8"  fill="#c0c3c9"/>
<rect x="1882.5" y="1009.6" width="10.6" height="8" rx="2" stroke="#c0c3c9" stroke-width="1.4" fill="none"/>
<path d="M1887.8 1012.6V1014.8" stroke="#c0c3c9" stroke-width="1.6" fill="none" stroke-linecap="round" stroke-linejoin="round" />
<path d="M1889.8 1009.4V1007.8A3.9 3.9 0 0 1 1897.6 1007.8V1009.6" stroke="#c0c3c9" stroke-width="1.4" fill="none" stroke-linecap="round" stroke-linejoin="round" />
</svg>

<div id="texts">
<span class="t" style='left:117.34px;top:14.56px;font-size:16px;color:#ffffff;transform:scaleX(0.9556);transform-origin:0 0;'>S</span>
<span class="t" style='left:143.50px;top:14.21px;font-size:17px;color:#dfe1e5;letter-spacing:0.562px;'>stopwatch</span>
<span class="t" style='left:269.30px;top:14.21px;font-size:17px;color:#dfe1e5;letter-spacing:0.233px;'>Version</span> <span class="t" style='left:333.50px;top:14.21px;font-size:17px;color:#dfe1e5;letter-spacing:0.650px;'>control</span> <span class="t" style='left:785.80px;top:14.21px;font-size:17px;color:#6a6e75;letter-spacing:-0.200px;'>Pixel</span> <span class="t" style='left:827.30px;top:14.21px;font-size:17px;color:#6a6e75;letter-spacing:-0.300px;transform:scaleX(0.8599);transform-origin:0 0;'>XL</span> <span class="t" style='left:851.30px;top:14.21px;font-size:17px;color:#6a6e75;letter-spacing:-0.300px;transform:scaleX(0.9370);transform-origin:0 0;'>API</span> <span class="t" style='left:882.00px;top:14.21px;font-size:17px;color:#6a6e75;letter-spacing:-0.300px;transform:scaleX(0.8182);transform-origin:0 0;'>31</span> <span class="t" style='left:992.30px;top:14.21px;font-size:17px;color:#dfe1e5;letter-spacing:0.125px;'>main.dart</span>
<span class="t" style='left:1375.00px;top:14.21px;font-size:17px;color:#dfe1e5;letter-spacing:-0.200px;'>Pixel</span> <span class="t" style='left:1416.50px;top:14.21px;font-size:17px;color:#dfe1e5;letter-spacing:-0.300px;transform:scaleX(0.8454);transform-origin:0 0;'>XL</span> <span class="t" style='left:1440.50px;top:14.21px;font-size:17px;color:#dfe1e5;letter-spacing:-0.300px;transform:scaleX(0.9291);transform-origin:0 0;'>API</span> <span class="t" style='left:1471.20px;top:14.21px;font-size:17px;color:#dfe1e5;letter-spacing:-0.300px;transform:scaleX(0.7861);transform-origin:0 0;'>31</span> <span class="t" style='left:1493.10px;top:14.21px;font-size:17px;color:#dfe1e5;letter-spacing:0.100px;'>(mobile)</span> <span class="t" style='left:66.50px;top:66.21px;font-size:17px;color:#dfe1e5;letter-spacing:1.500px;-webkit-text-stroke:.3px #dfe1e5;'>Android</span>
<span class="t" style='left:116.50px;top:112.21px;font-size:17px;color:#dfe1e5;letter-spacing:1.369px;-webkit-text-stroke:.25px #dfe1e5;'>stopwatch_android</span>
<span class="t" style='left:140.60px;top:142.21px;font-size:17px;color:#dfe1e5;letter-spacing:0.367px;'>android</span>
<span class="t" style='left:164.30px;top:172.21px;font-size:17px;color:#dfe1e5;letter-spacing:0.150px;'>app</span>
<span class="t" style='left:164.30px;top:202.21px;font-size:17px;color:#dfe1e5;letter-spacing:0.140px;'>gradle</span>
<span class="t" style='left:164.10px;top:232.21px;font-size:17px;color:#dfe1e5;letter-spacing:0.311px;'>.gitignore</span>
<span class="t" style='left:164.00px;top:262.21px;font-size:17px;color:#dfe1e5;letter-spacing:0.073px;'>build.gradle</span>
<span class="t" style='left:164.30px;top:292.21px;font-size:17px;color:#dfe1e5;letter-spacing:0.169px;'>gradle.properties</span>
<span class="t" style='left:164.30px;top:322.21px;font-size:17px;color:#dfe1e5;letter-spacing:0.033px;'>gradlew</span>
<span class="t" style='left:164.30px;top:352.21px;font-size:17px;color:#dfe1e5;letter-spacing:0.230px;'>gradlew.bat</span>
<span class="t" style='left:164.00px;top:382.21px;font-size:17px;color:#dfe1e5;letter-spacing:0.200px;'>local.properties</span>
<span class="t" style='left:164.30px;top:412.21px;font-size:17px;color:#dfe1e5;letter-spacing:0.321px;'>settings.gradle</span>
<span class="t" style='left:164.30px;top:442.21px;font-size:17px;color:#dfe1e5;letter-spacing:0.260px;'>stopwatch_android.iml</span>
<span class="t" style='left:206.70px;top:142.21px;font-size:17px;color:#73777e;letter-spacing:0.188px;'>C:\Users\</span><span class="t" style='left:279.50px;top:142.21px;font-size:17px;color:#73777e;letter-spacing:0.800px;'>hiro-\</span><span class="t" style='left:323.30px;top:142.21px;font-size:17px;color:#73777e;letter-spacing:0.136px;'>StudioProjects\</span><span class="t" style='left:441.30px;top:142.21px;font-size:17px;color:#73777e;letter-spacing:0.611px;'>stopwatch\</span><span class="t" style='left:530.30px;top:142.21px;font-size:17px;color:#73777e;letter-spacing:0.150px;'>android</span><span class="t" style='left:663.63px;top:66.21px;font-size:17px;color:#dfe1e5;letter-spacing:-0.300px;transform:scaleX(0.9710);transform-origin:0 0;'>README.md</span>
<span class="t" style='left:837.30px;top:66.21px;font-size:17px;color:#dfe1e5;letter-spacing:0.125px;'>main.dart</span>
<span class="t" style='left:1404.70px;top:66.21px;font-size:17px;color:#dfe1e5;letter-spacing:0.967px;-webkit-text-stroke:.3px #dfe1e5;'>Running</span> <span class="t" style='left:1479.90px;top:66.21px;font-size:17px;color:#dfe1e5;letter-spacing:1.100px;-webkit-text-stroke:.3px #dfe1e5;'>Devices</span> <span class="t" style='left:1607.75px;top:66.21px;font-size:17px;color:#dfe1e5;letter-spacing:-0.113px;'>Pixel</span> <span class="t" style='left:1649.20px;top:66.21px;font-size:17px;color:#dfe1e5;letter-spacing:-0.300px;transform:scaleX(0.8647);transform-origin:0 0;'>XL</span> <span class="t" style='left:1673.30px;top:66.21px;font-size:17px;color:#dfe1e5;letter-spacing:-0.300px;transform:scaleX(0.9740);transform-origin:0 0;'>A...</span> <span class="t" style='left:33.60px;top:999.21px;font-size:17px;color:#a8adb5;letter-spacing:0.575px;'>stopwatch</span>
<span class="t" style='left:1577.55px;top:999.21px;font-size:17px;color:#a8adb5;letter-spacing:-0.300px;transform:scaleX(0.8505);transform-origin:0 0;'>1:1</span>
<span class="t" style='left:1617.78px;top:999.21px;font-size:17px;color:#a8adb5;letter-spacing:-0.300px;transform:scaleX(0.9216);transform-origin:0 0;'>CRLF</span>
<span class="t" style='left:1678.60px;top:999.21px;font-size:17px;color:#a8adb5;letter-spacing:0.175px;'>UTF-8</span>
<span class="t" style='left:1787.76px;top:999.21px;font-size:17px;color:#a8adb5;transform:scaleX(0.9938);transform-origin:0 0;'>2</span> <span class="t" style='left:1803.75px;top:999.21px;font-size:17px;color:#a8adb5;letter-spacing:-0.110px;'>spaces</span> <span class="t" style='left:1821.08px;top:904.06px;font-size:13.4px;color:#c9ccd2;font-weight:700;letter-spacing:-0.300px;transform:scaleX(0.8152);transform-origin:0 0;'>1:1</span>
<span class="t" style='left:636.93px;top:65.73px;font-size:12.6px;color:#4d7fd9;font-weight:700;transform:scaleX(1.2667);transform-origin:0 0;'>M</span>

</div>
</body></html>
